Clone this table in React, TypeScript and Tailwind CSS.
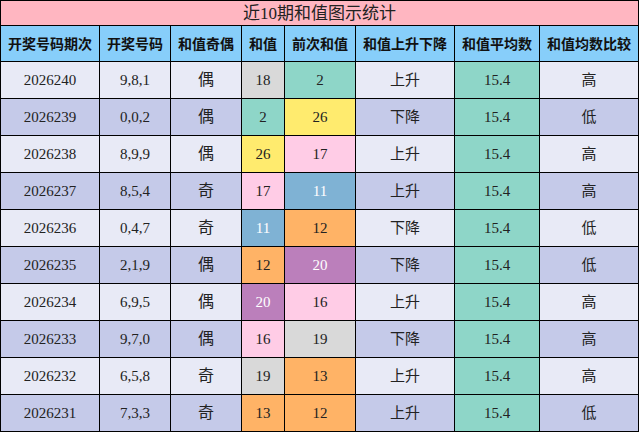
import React from "react";

type Row = [string, string, string, number, number, string, string];

const rows: Row[] = [
  ["2026240", "9,8,1", "偶", 18, 2, "上升", "高"],
  ["2026239", "0,0,2", "偶", 2, 26, "下降", "低"],
  ["2026238", "8,9,9", "偶", 26, 17, "上升", "高"],
  ["2026237", "8,5,4", "奇", 17, 11, "上升", "高"],
  ["2026236", "0,4,7", "奇", 11, 12, "下降", "低"],
  ["2026235", "2,1,9", "偶", 12, 20, "下降", "低"],
  ["2026234", "6,9,5", "偶", 20, 16, "上升", "高"],
  ["2026233", "9,7,0", "偶", 16, 19, "下降", "高"],
  ["2026232", "6,5,8", "奇", 19, 13, "上升", "高"],
  ["2026231", "7,3,3", "奇", 13, 12, "上升", "低"],
];

const sumClass = (v: number): string => {
  switch (v) {
    case 2:
      return "bg-[#8ed6c8] text-[#222]";
    case 11:
      return "bg-[#7fb2d4] text-white";
    case 12:
    case 13:
      return "bg-[#ffb366] text-[#222]";
    case 16:
    case 17:
      return "bg-[#ffcce6] text-[#222]";
    case 18:
    case 19:
      return "bg-[#d9d9d9] text-[#222]";
    case 20:
      return "bg-[#bb7fbb] text-white";
    case 26:
      return "bg-[#ffeb6e] text-[#222]";
    default:
      return "bg-white";
  }
};

const headers = ["开奖号码期次", "开奖号码", "和值奇偶", "和值", "前次和值", "和值上升下降", "和值平均数", "和值均数比较"];

export default function App() {
  return (
    <div
      className="w-[639px] h-[432px] bg-black p-px grid gap-px grid-cols-[98px_70px_70px_42px_70px_98px_84px_98px] grid-rows-[24px_35px_repeat(10,36px)] text-[#222]"
      style={{ fontFamily: '"Liberation Serif", "Noto Sans CJK SC", serif' }}
    >
      <div className="col-span-8 bg-[#ffb6c1] flex items-center justify-center text-[17px] leading-none pt-px">
        近10期和值图示统计
      </div>
      {headers.map((h) => (
        <div
          key={h}
          className="bg-[#87cefa] flex items-center justify-center text-[14px] font-bold text-[#111]"
          style={{ fontFamily: '"Noto Sans CJK SC", sans-serif' }}
        >
          {h}
        </div>
      ))}
      {rows.map((r, i) => {
        const bg = i % 2 === 0 ? "bg-[#e8eaf6]" : "bg-[#c5cae9]";
        return (
          <React.Fragment key={r[0]}>
            <div className={`${bg} flex items-center justify-center text-[15px]`}>{r[0]}</div>
            <div className={`${bg} flex items-center justify-center text-[15px]`}>{r[1]}</div>
            <div className={`${bg} flex items-center justify-center text-[16px]`}>{r[2]}</div>
            <div className={`${sumClass(r[3])} flex items-center justify-center text-[15px]`}>{r[3]}</div>
            <div className={`${sumClass(r[4])} flex items-center justify-center text-[15px]`}>{r[4]}</div>
            <div className={`${bg} flex items-center justify-center text-[15px]`}>{r[5]}</div>
            <div className="bg-[#8ed6c8] flex items-center justify-center text-[15px]">15.4</div>
            <div className={`${bg} flex items-center justify-center text-[15px]`}>{r[6]}</div>
          </React.Fragment>
        );
      })}
    </div>
  );
}
